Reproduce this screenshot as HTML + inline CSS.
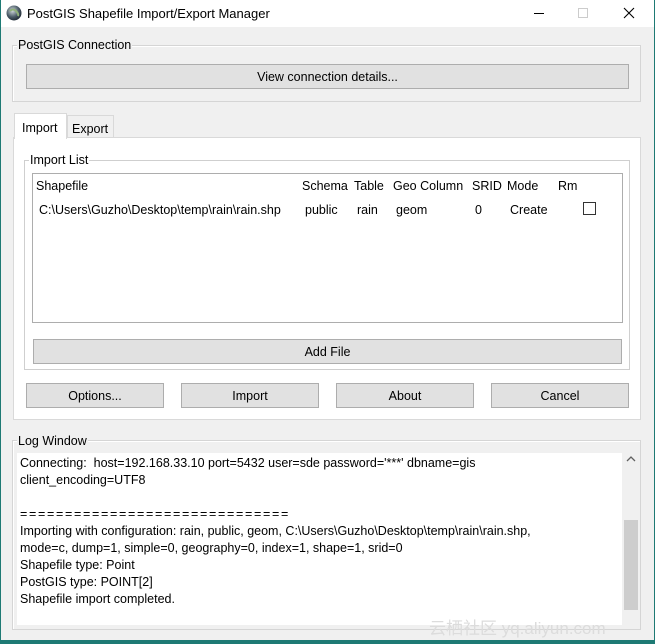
<!DOCTYPE html>
<html><head><meta charset="utf-8"><style>
*{box-sizing:border-box;margin:0;padding:0}
body{width:655px;height:644px;overflow:hidden;background:#1e7a74;font-family:"Liberation Sans",sans-serif;font-size:12.5px;color:#000;position:relative}
.win{position:absolute;left:1px;top:0;width:653px;height:640px;background:#f0f0f0}
.title{position:absolute;left:0;top:0;width:653px;height:27px;background:#fff}
.abs{position:absolute}
.grp{position:absolute;border:1px solid #d5d5d5;box-shadow:inset 1px 1px 0 #fff}
.lbl{position:absolute;background:#f0f0f0;padding:0 1px;line-height:14px;font-size:12.5px}
.btn{position:absolute;background:#e1e1e1;border:1px solid #adadad;text-align:center;font-size:12.5px}
.hdr{position:absolute;top:179px;font-size:12.5px}
.row{position:absolute;top:203px;font-size:12.5px}
.log div{height:17px;line-height:17px;white-space:nowrap}
</style></head><body>
<div class="win">
<div class="title">
 <svg class="abs" style="left:5px;top:5px" width="16" height="16"><defs><radialGradient id="g" cx="0.4" cy="0.35" r="0.7"><stop offset="0" stop-color="#cfd8dc"/><stop offset="0.6" stop-color="#4a5a66"/><stop offset="1" stop-color="#1c2630"/></radialGradient></defs><circle cx="8" cy="8" r="7.5" fill="url(#g)"/><path d="M4 6q3-3 6 0t2 5" stroke="#8fb07a" stroke-width="2" fill="none"/></svg>
 <div class="abs" style="left:26px;top:6px;font-size:13px">PostGIS Shapefile Import/Export Manager</div>
 <div class="abs" style="left:533px;top:13px;width:10px;height:1px;background:#000"></div>
 <div class="abs" style="left:577px;top:8px;width:10px;height:10px;border:1px solid #ccc"></div>
 <svg class="abs" style="left:622px;top:7px" width="12" height="12"><path d="M1 1L11 11M11 1L1 11" stroke="#000" stroke-width="1.1"/></svg>
</div>
<div class="grp" style="left:11px;top:45px;width:629px;height:57px"></div>
<div class="lbl" style="left:16px;top:38px">PostGIS Connection</div>
<div class="btn" style="left:25px;top:64px;width:603px;height:25px;line-height:24px">View connection details...</div>

<div class="abs" style="left:12px;top:137px;width:628px;height:283px;background:#fff;border:1px solid #d9d9d9"></div>
<div class="abs" style="left:13px;top:113px;width:53px;height:26px;background:#fff;border:1px solid #d9d9d9;border-bottom:none;padding:7px 0 0 7px">Import</div>
<div class="abs" style="left:66px;top:115px;width:47px;height:22px;background:#f0f0f0;border:1px solid #d9d9d9;border-bottom:none;padding:6px 0 0 4px">Export</div>

<div class="grp" style="left:23px;top:160px;width:606px;height:210px;box-shadow:none;border-color:#cfcfcf"></div>
<div class="lbl" style="left:28px;top:153px;background:#fff">Import List</div>
<div class="abs" style="left:31px;top:173px;width:591px;height:150px;border:1px solid #adadad;background:#fff"></div>
<div class="hdr" style="left:35px">Shapefile</div>
<div class="hdr" style="left:301px">Schema</div>
<div class="hdr" style="left:353px">Table</div>
<div class="hdr" style="left:392px">Geo Column</div>
<div class="hdr" style="left:471px">SRID</div>
<div class="hdr" style="left:506px">Mode</div>
<div class="hdr" style="left:557px">Rm</div>
<div class="row" style="left:38px">C:\Users\Guzho\Desktop\temp\rain\rain.shp</div>
<div class="row" style="left:304px">public</div>
<div class="row" style="left:356px">rain</div>
<div class="row" style="left:395px">geom</div>
<div class="row" style="left:474px">0</div>
<div class="row" style="left:509px">Create</div>
<div class="abs" style="left:582px;top:202px;width:13px;height:13px;border:1px solid #333;background:#fff"></div>
<div class="btn" style="left:32px;top:339px;width:589px;height:25px;line-height:24px">Add File</div>
<div class="btn" style="left:25px;top:383px;width:138px;height:25px;line-height:24px">Options...</div>
<div class="btn" style="left:180px;top:383px;width:138px;height:25px;line-height:24px">Import</div>
<div class="btn" style="left:335px;top:383px;width:138px;height:25px;line-height:24px">About</div>
<div class="btn" style="left:490px;top:383px;width:138px;height:25px;line-height:24px">Cancel</div>

<div class="grp" style="left:11px;top:440px;width:629px;height:190px"></div>
<div class="lbl" style="left:16px;top:434px">Log Window</div>
<div class="abs" style="left:16px;top:453px;width:622px;height:172px;background:#fff"></div>
<div class="abs" style="left:621px;top:453px;width:17px;height:172px;background:#f0f0f0"></div>
<div class="abs" style="left:623px;top:520px;width:14px;height:90px;background:#cdcdcd"></div>
<svg class="abs" style="left:625px;top:455px" width="10" height="8"><path d="M1 6L5 2L9 6" stroke="#606060" stroke-width="1.3" fill="none"/></svg>
<div class="abs log" style="left:19px;top:455px">
<div>Connecting:&nbsp; host=192.168.33.10 port=5432 user=sde password='***' dbname=gis</div>
<div>client_encoding=UTF8</div>
<div>&nbsp;</div>
<div style="letter-spacing:1.7px">==============================</div>
<div>Importing with configuration: rain, public, geom, C:\Users\Guzho\Desktop\temp\rain\rain.shp,</div>
<div>mode=c, dump=1, simple=0, geography=0, index=1, shape=1, srid=0</div>
<div>Shapefile type: Point</div>
<div>PostGIS type: POINT[2]</div>
<div>Shapefile import completed.</div>
</div>
<div class="abs" style="left:428px;top:614px;font-size:17px;color:#dcdcdc;font-family:'Liberation Sans','Noto Sans CJK SC',sans-serif">云栖社区 yq.aliyun.com</div>
</div>
</body></html>
